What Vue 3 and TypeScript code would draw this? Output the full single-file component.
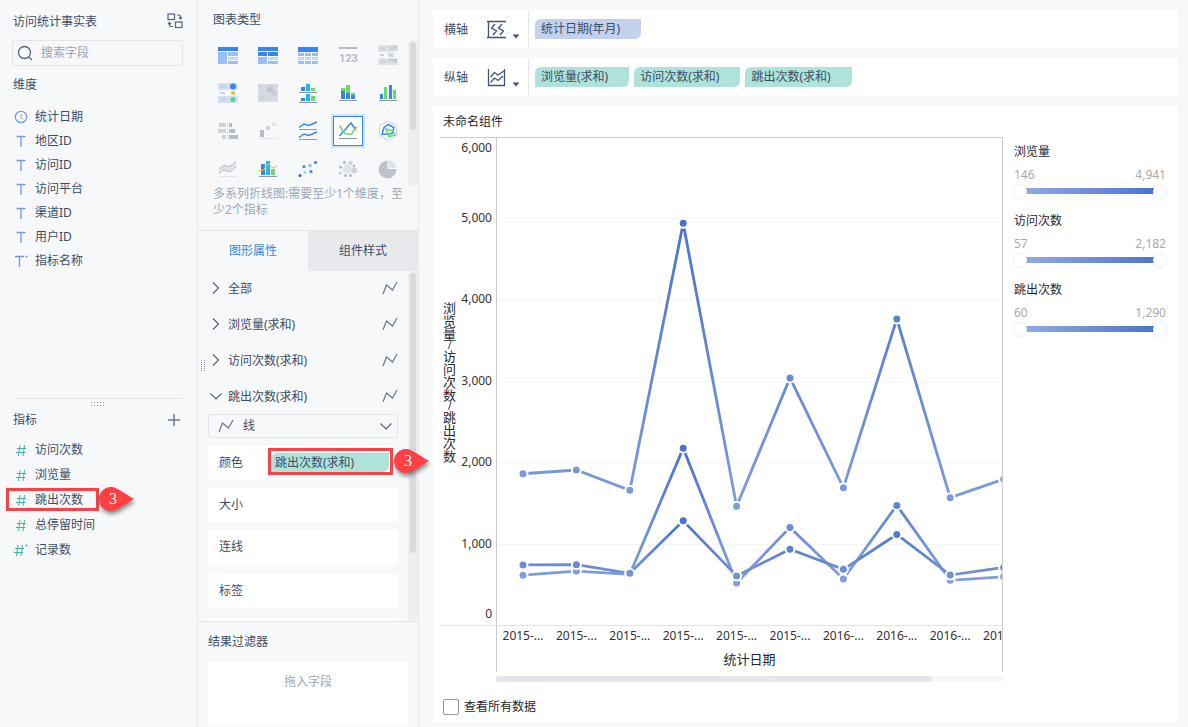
<script setup lang="ts">
import { ref } from 'vue'

type Shape = [string, Record<string, string | number>, string?]
interface ChartType { name: string; shapes: Shape[] }
interface Series { id: string; name: string; min: number; max: number; low: string; high: string; values: number[] }

const blue = '#3685f2'
const sky = '#96c0f7'
const pale = '#c0d9fa'
const cyan = '#22b5ee'
const green = '#6ad96f'
const base = '#8d98a8'
const g1 = '#b5bcc7'
const g2 = '#cdd2db'
const g3 = '#dfe3ea'

const r = (x: number, y: number, width: number, height: number, fill: string): Shape => ['rect', { x, y, width, height, fill }]
const c = (cx: number, cy: number, rad: number, fill: string): Shape => ['circle', { cx, cy, r: rad, fill }]
const l = (points: string, stroke: string, w = 1.5): Shape => ['polyline', { points, stroke, 'stroke-width': w, fill: 'none' }]
const p = (points: string, fill: string, stroke = 'none', w = 1): Shape => ['polygon', { points, fill, stroke, 'stroke-width': w }]
const t = (x: number, y: number, size: number, fill: string, text: string): Shape => ['text', { x, y, 'font-size': size, fill }, text]

const chartTypes: ChartType[] = [
  { name: '分组表', shapes: [r(0, 2, 20, 4, blue), r(0, 7, 9, 12, sky), r(10, 7, 10, 4, sky), r(10, 12, 10, 3, pale), r(10, 16, 10, 3, sky)] },
  { name: '交叉表', shapes: [r(0, 2, 20, 4, blue), r(0, 7, 9, 4, blue), r(10, 7, 10, 4, blue), r(0, 12, 9, 7, sky), r(10, 12, 10, 3, pale), r(10, 16, 10, 3, sky)] },
  { name: '明细表', shapes: [r(0, 2, 20, 5, blue), ...[8, 12, 16].flatMap((y) => [0, 7, 14].map((x) => r(x, y, 6, 3, y === 12 ? pale : sky)))] },
  { name: '指标卡', shapes: [r(1, 2, 18, 2, g1), t(1, 17, 11, g1, '123')] },
  { name: '颜色表格', shapes: [r(0, 0, 20, 7, g3), r(0, 13, 20, 7, g3), r(2, 2, 6, 3, g2), r(2, 9, 4, 2, g2), r(2, 15, 6, 3, g2), t(10, 5, 5, g1, '123'), t(10, 12, 5, g1, '90'), t(10, 18, 5, g1, '778')] },
  { name: '热力表格', shapes: [r(0, 0, 20, 7, '#d0e0fa'), r(0, 13, 20, 7, '#d0e0fa'), r(2, 2, 6, 3, g2), r(2, 9, 5, 2, g2), r(2, 15, 6, 3, g2), c(15, 3.5, 3, blue), c(15, 10, 2, '#f9b81f'), c(15, 16.5, 2.5, '#5fd37a')] },
  { name: '热力区域图', shapes: [r(0, 1, 20, 18, '#d8dce4'), c(12, 6, 4, '#c9ced8'), c(16, 10, 3, '#c9ced8'), c(4, 15, 3, '#ced3dc'), c(2, 4, 2, '#ced3dc'), c(12, 7, 2, '#bcc3cd'), c(16, 10, 1, '#bcc3cd'), c(12, 16, 2, '#ced3dc'), c(18, 3, 1, '#c9ced8')] },
  { name: '多系列柱形图', shapes: [r(3, 4, 4, 4, blue), r(8, 1, 4, 7, cyan), r(13, 5, 4, 3, green), r(1, 9, 18, 1, base), r(3, 15, 4, 3, blue), r(8, 11, 4, 7, cyan), r(13, 13, 4, 5, green), r(1, 19, 18, 1, base)] },
  { name: '堆积柱形图', shapes: [r(3, 5, 4, 3, green), r(3, 8, 4, 8, blue), r(8, 2, 4, 8, green), r(8, 10, 4, 6, blue), r(13, 10, 4, 2, green), r(13, 12, 4, 4, blue), r(1, 17, 18, 1, base)] },
  { name: '柱形图', shapes: [r(2, 11, 3, 5, blue), r(6, 4, 3, 12, green), r(11, 2, 3, 14, blue), r(15, 7, 3, 9, green), r(1, 17, 18, 1, base)] },
  { name: '对比柱状图', shapes: [r(1, 2, 7, 4, g2), r(11, 2, 3, 4, g1), r(0, 8, 8, 4, g2), r(11, 8, 6, 4, g1), r(4, 14, 4, 4, g2), r(11, 14, 9, 4, g1), r(9, 1, 1, 18, g3)] },
  { name: '瀑布图', shapes: [r(2, 9, 4, 7, g1), r(8, 5, 4, 4, g2), r(14, 2, 4, 3, g3), r(1, 17, 18, 1, g3)] },
  { name: '分区折线图', shapes: [l('1,6.5 6,3 11,4.5 19,1', blue), r(1, 8, 18, 1, base), l('1,16.5 6,13 11,14.5 19,11', blue), r(1, 18, 18, 1, base)] },
  { name: '多系列折线图', shapes: [l('1.5,15 13,2 18,9', blue), l('1.5,4.5 6.5,12.5 13.5,13.5 18.5,5.5', green), r(1, 17, 18, 1, base)] },
  { name: '雷达图', shapes: [p('10,0 18.5,4.5 18.5,14.5 10,19.5 1.5,14.5 1.5,4.5', 'none', g2), p('4,13.5 6,6.5 10.5,3.5 16,6.5 14,12.5', 'none', blue, 1.5), p('8,8 15,10 17,14 11,15.5', 'none', green, 1.5)] },
  { name: '范围面积图', shapes: [p('1,10 6,6.5 12,7.5 18,2 18,8 12,13 6,11 1,14.5', g3), l('1,10 6,6.5 12,7.5 18,2', g1, 1), l('1,14.5 6,11 12,13 18,8', g1, 1), r(1, 17, 18, 1, g3)] },
  { name: '组合图', shapes: [r(3, 5, 4, 11, blue), r(8, 2, 4, 14, cyan), r(13, 10, 4, 6, green), l('1,11.5 5,11.5 10,4.5 15,9 19,7', '#f5b921', 1), r(1, 17, 18, 1, base)] },
  { name: '散点图', shapes: [c(2, 16.5, 1.6, '#3b62c9'), c(6, 7.5, 1.6, blue), c(7, 13.5, 1.6, '#9be0d3'), c(12, 6.5, 1.6, '#5cc5d5'), c(13, 12.5, 1.6, blue), c(17.5, 3.5, 1.6, '#2f8fe8')] },
  { name: '聚合气泡图', shapes: [c(9, 10, 4.5, g3), c(6.5, 3.5, 1.7, g1), c(12.5, 4, 2.3, g2), c(16, 7, 1.4, g1), c(16, 11.5, 3, g2), c(12.5, 16.5, 1.6, g1), c(7.5, 16.5, 1.6, g1), c(2.5, 14, 1.8, g2), c(2.5, 8, 1.6, g1)] },
  { name: '饼图', shapes: [c(9.5, 10.5, 9, '#bcc3cd'), ['path', { d: 'M10 0.5A9 9 0 0 1 19 9.5H10Z', fill: g3, stroke: '#f7f8fa', 'stroke-width': 1 }]] },
]
const selectedType = ref(13)

const dimensions = [
  { name: '统计日期', icon: 'clock' },
  { name: '地区ID', icon: 'text' },
  { name: '访问ID', icon: 'text' },
  { name: '访问平台', icon: 'text' },
  { name: '渠道ID', icon: 'text' },
  { name: '用户ID', icon: 'text' },
  { name: '指标名称', icon: 'textStar' },
]
const measures = [
  { name: '访问次数', star: false },
  { name: '浏览量', star: false },
  { name: '跳出次数', star: false },
  { name: '总停留时间', star: false },
  { name: '记录数', star: true },
]
const groups = ['全部', '浏览量(求和)', '访问次数(求和)', '跳出次数(求和)']
const openGroup = ref('跳出次数(求和)')
const attributes = ['大小', '连线', '标签']
const verticalFields = ['浏览量(求和)', '访问次数(求和)', '跳出次数(求和)']
const axisTitle = ['浏览量', '/', '访问次数', '/', '跳出次数']

const step = 53.4
const plotHeight = 488
const yOf = (v: number) => plotHeight - (v / 6000) * 489
const xOf = (i: number) => 26 + i * step
const ticks = [
  { label: '6,000', y: 14 }, { label: '5,000', y: 84 }, { label: '4,000', y: 165 }, { label: '3,000', y: 247 },
  { label: '2,000', y: 328 }, { label: '1,000', y: 410 }, { label: '0', y: 480 },
]
const years = [2015, 2015, 2015, 2015, 2015, 2015, 2016, 2016, 2016, 2016]
const series: Series[] = [
  { id: 'views', name: '浏览量', min: 146, max: 4941, low: '146', high: '4,941', values: [1868, 1914, 1665, 4941, 1468, 3043, 1696, 3767, 1575, 1800] },
  { id: 'visits', name: '访问次数', min: 57, max: 2182, low: '57', high: '2,182', values: [624, 674, 633, 2182, 528, 1210, 577, 1480, 560, 605] },
  { id: 'bounces', name: '跳出次数', min: 60, max: 1290, low: '60', high: '1,290', values: [750, 752, 646, 1290, 615, 941, 695, 1123, 625, 718] },
]
const from = [147, 172, 226]
const to = [74, 114, 202]
const colorOf = (s: Series, v: number) => {
  const k = (v - s.min) / (s.max - s.min)
  return `rgb(${from.map((a, i) => Math.round(a + (to[i] - a) * k)).join(',')})`
}
const pointsOf = (s: Series) => s.values.map((v, i) => `${xOf(i)},${yOf(v)}`).join(' ')
</script>

<template>
  <div class="app">
    <aside class="fields">
      <section class="pane dims">
        <header class="pane-head">
          <h2>访问统计事实表</h2>
          <button class="plain" aria-label="切换数据表">
            <svg width="16" height="16" viewBox="0 0 16 16" fill="none" stroke="#56647c" stroke-width="1.200"><rect x="1" y="1" width="6.500" height="5.500" /><rect x="8.500" y="9" width="6.500" height="5.500" /><path d="M10 2h2q1.500 0 1.500 1.500v2M12 4.500l1.500 1.500L15 4.500M6 13.500H4q-1.500 0-1.500-1.500v-2M1 11l1.500-1.500L4 11" /></svg>
          </button>
        </header>
        <label class="search">
          <svg width="16" height="16" viewBox="0 0 16 16" fill="none" stroke="#56647c" stroke-width="1.300"><circle cx="7.500" cy="7.500" r="6" /><path d="M12 12l3 3" /></svg>
          <input type="search" placeholder="搜索字段" aria-label="搜索字段" />
        </label>
        <h3>维度</h3>
        <ul class="list">
          <li v-for="d in dimensions" :key="d.name">
            <svg width="14" height="14" viewBox="0 0 14 14" fill="none" stroke="#6f9ae6">
              <template v-if="d.icon === 'clock'"><circle cx="7" cy="7" r="5.700" stroke-width="1.200" /><path d="M7 4v3.500l2 2" /></template>
              <template v-else><path :d="d.icon === 'text' ? 'M2.500 2.500h9M7 2.500v10.500' : 'M1 2.500h9M5.500 2.500v10.500'" stroke-width="1.300" /><circle v-if="d.icon === 'textStar'" cx="12.500" cy="2.500" r="0.700" /></template>
            </svg>
            <span>{{ d.name }}</span>
          </li>
        </ul>
      </section>
      <section class="pane measures">
        <div class="grip"><i v-for="n in 10" :key="n"></i></div>
        <header class="pane-head">
          <h2>指标</h2>
          <button class="plain" aria-label="添加指标">
            <svg width="18" height="18" viewBox="0 0 18 18" stroke="#6b788d" stroke-width="1.500"><path d="M3 9h12M9 3v12" /></svg>
          </button>
        </header>
        <ul class="list tall">
          <li v-for="m in measures" :key="m.name">
            <svg width="14" height="14" viewBox="0 0 14 14" fill="none" stroke="#3db5a5">
              <path :d="m.star ? 'M1 5.500h9M0 9.500h9M4 2L2.500 13M8.500 2L7 13' : 'M3 5.500h9M2 9.500h9M6 2L4.500 13M10.500 2L9 13'" />
              <circle v-if="m.star" cx="12.500" cy="2.500" r="0.700" />
            </svg>
            <span>{{ m.name }}</span>
            <template v-if="m.name === '跳出次数'">
              <div class="mark field-mark"></div>
              <div class="pin field-pin">
                <svg width="36" height="24" viewBox="0 0 36 24"><path d="M12 0C17 0 20 3 35 12C20 21 17 24 12 24A12 12 0 0 1 12 0Z" fill="#fd4145" /></svg>
                <b>3</b>
              </div>
            </template>
          </li>
        </ul>
      </section>
    </aside>

    <aside class="config">
      <section class="types">
        <h2>图表类型</h2>
        <div class="types-scroll">
          <div class="type-grid">
            <button v-for="(ct, i) in chartTypes" :key="ct.name" class="type" :class="{ on: i === selectedType }" :aria-label="ct.name" @click="selectedType = i">
              <svg width="20" height="20" viewBox="0 0 20 20">
                <component :is="s[0]" v-for="(s, k) in ct.shapes" :key="k" v-bind="s[1]">{{ s[2] }}</component>
              </svg>
            </button>
          </div>
          <div class="bar"><i class="types-thumb"></i></div>
        </div>
        <p>多系列折线图:需要至少1个维度，至少2个指标</p>
      </section>
      <div class="tabs" role="tablist">
        <button role="tab" aria-selected="true" class="on">图形属性</button>
        <button role="tab" aria-selected="false">组件样式</button>
      </div>
      <section class="props">
        <div class="props-body">
          <button v-for="g in groups" :key="g" class="group" :aria-expanded="g === openGroup" @click="openGroup = g">
            <svg width="12" height="12" viewBox="0 0 12 12" fill="none" stroke="#56647c" stroke-width="1.200"><path :d="g === openGroup ? 'M0.500 3.500L6 9l5.500-5.500' : 'M3 0.500L8.500 6L3 11.500'" /></svg>
            <span>{{ g }}</span>
            <svg width="16" height="14" viewBox="0 0 16 14" fill="none" stroke="#6b788d" stroke-width="1.200"><path d="M1 13L4.500 4l6 5L15 1" /></svg>
          </button>
          <div class="shape">
            <svg width="16" height="14" viewBox="0 0 16 14" fill="none" stroke="#6b788d" stroke-width="1.200"><path d="M1 13L4.500 4l6 5L15 1" /></svg>
            <select aria-label="图形"><option>线</option></select>
            <svg class="chev" width="12" height="12" viewBox="0 0 12 12" fill="none" stroke="#56647c" stroke-width="1.200"><path d="M0.500 3.500L6 9l5.500-5.500" /></svg>
          </div>
          <div class="attr color">
            <span>颜色</span>
            <div class="drop"><span class="chip teal fill">跳出次数(求和)</span></div>
            <div class="pin color-pin">
              <svg width="36" height="24" viewBox="0 0 36 24"><path d="M12 0C17 0 20 3 35 12C20 21 17 24 12 24A12 12 0 0 1 12 0Z" fill="#fd4145" /></svg>
              <b>3</b>
            </div>
          </div>
          <div v-for="a in attributes" :key="a" class="attr" :class="{ far: a !== '大小' }">{{ a }}</div>
          <div class="attr"></div>
        </div>
        <div class="bar"><i class="props-thumb"></i></div>
      </section>
      <section class="filter">
        <h2>结果过滤器</h2>
        <div class="dropzone">拖入字段</div>
      </section>
      <div class="side-grip"><i v-for="n in 12" :key="n"></i></div>
    </aside>

    <main class="work">
      <section class="axis-row">
        <span class="axis-name">横轴</span>
        <button class="axis-btn" aria-label="横轴设置">
          <svg width="19" height="19" viewBox="0 0 19 19" fill="none" stroke="#44536c" stroke-width="1.300"><path d="M0 1.500h19M0 17.500h19M1.500 1v17M8 4L4.500 8l5 3L6 15M15 4l-3.500 4l5 3L13 15" /></svg>
          <svg class="caret" width="8" height="5" viewBox="0 0 8 5"><path d="M0.500 0.500h7L4 4.500z" fill="#44536c" /></svg>
        </button>
        <div class="chips"><span class="chip indigo">统计日期(年月)</span></div>
      </section>
      <section class="axis-row">
        <span class="axis-name">纵轴</span>
        <button class="axis-btn" aria-label="纵轴设置">
          <svg width="19" height="19" viewBox="0 0 19 19" fill="none" stroke="#44536c" stroke-width="1.300"><path d="M1.500 1v16.500H17.500V1M3.500 9l4-4.500l3.500 2.500L17 3M3.500 14.500L7.500 10l3.500 2.500L16 8" /></svg>
          <svg class="caret" width="8" height="5" viewBox="0 0 8 5"><path d="M0.500 0.500h7L4 4.500z" fill="#44536c" /></svg>
        </button>
        <div class="chips"><span v-for="f in verticalFields" :key="f" class="chip teal">{{ f }}</span></div>
      </section>
      <section class="board">
        <h1>未命名组件</h1>
        <div class="content">
          <div class="chart">
            <div class="frame">
              <div class="yaxis">
                <div class="ytitle"><span v-for="(a, i) in axisTitle" :key="i" :class="{ slash: a === '/' }">{{ a }}</span></div>
                <svg class="yticks" width="40" :height="plotHeight">
                  <text v-for="k in ticks" :key="k.label" x="36" :y="k.y" text-anchor="end">{{ k.label }}</text>
                </svg>
              </div>
              <div class="plot">
                <svg :width="step * 11" height="509">
                  <defs>
                    <linearGradient v-for="s in series" :id="s.id" :key="s.id" gradientUnits="userSpaceOnUse" x1="0" x2="0" :y1="yOf(s.min)" :y2="yOf(s.max)">
                      <stop offset="0" stop-color="#93ace2" /><stop offset="1" stop-color="#4a72ca" />
                    </linearGradient>
                  </defs>
                  <line v-for="n in 5" :key="n" x1="0" :x2="step * 11" :y1="yOf(n * 1000)" :y2="yOf(n * 1000)" stroke="#f5f5f5" />
                  <g v-for="s in series" :key="s.id">
                    <polyline :points="pointsOf(s)" fill="none" :stroke="`url(#${s.id})`" stroke-width="2.800" />
                    <circle v-for="(v, i) in s.values" :key="i" :cx="xOf(i)" :cy="yOf(v)" r="4.500" :fill="colorOf(s, v)" stroke="#fff" stroke-width="2" />
                  </g>
                  <text v-for="(y, i) in years" :key="i" :x="xOf(i)" y="502" text-anchor="middle">{{ y }}-...</text>
                </svg>
                <div class="xtitle">统计日期</div>
              </div>
            </div>
            <div class="hscroll"><i></i></div>
          </div>
          <div class="legend">
            <div v-for="s in series" :key="s.id" class="scale">
              <h4>{{ s.name }}</h4>
              <div class="ends"><span>{{ s.low }}</span><span>{{ s.high }}</span></div>
              <div class="slider">
                <input type="range" :min="s.min" :max="s.max" :value="s.min" :aria-label="s.name + '最小值'" />
                <input type="range" :min="s.min" :max="s.max" :value="s.max" :aria-label="s.name + '最大值'" />
              </div>
            </div>
          </div>
        </div>
        <label class="all"><input type="checkbox" /><span>查看所有数据</span></label>
      </section>
    </main>
  </div>
</template>

<style>
html, body { margin: 0; background: #f7f8fa; }
</style>

<style scoped>
* { box-sizing: border-box; }
.app { display: flex; min-height: 100vh; font: 12px/16px "Noto Sans", "Noto Sans CJK SC", sans-serif; color: #3d4d66; background: #f7f8fa; }
h1, h2, h3, h4, p, ul { margin: 0; padding: 0; font-size: 12px; font-weight: 400; list-style: none; }
button, input, select { font: inherit; color: inherit; margin: 0; padding: 0; border: 0; background: none; border-radius: 0; }
button { cursor: pointer; }
svg { display: block; flex: none; }

.fields { flex: none; width: 198px; border-right: 1px solid #e6e8ee; display: flex; flex-direction: column; }
.pane { padding: 0 14px 0 13px; }
.dims { flex: 398 1 0; }
.measures { flex: 329 1 0; position: relative; }
.measures::before { content: ""; display: block; border-top: 1px solid #e4e6ea; }
.pane-head { display: flex; align-items: center; justify-content: space-between; height: 18px; margin-top: 12px; }
.dims .pane-head h2 { padding-top: 2px; }
.plain { display: flex; }
.grip { position: absolute; top: 4px; left: 91px; display: grid; grid-template-columns: repeat(5, 1px); gap: 2px; }
.grip i, .side-grip i { width: 1px; height: 1px; background: #8b96a8; }
.search { display: flex; align-items: center; gap: 8px; height: 26px; margin: 10px 0 11px -1px; padding: 0 4px; border: 1px solid #e4e6ea; border-radius: 2px; }
.search input { flex: 1; min-width: 0; outline: 0; appearance: none; }
.search input::placeholder { color: #9aa3b3; opacity: 1; }
.dims .list { margin-top: 12px; }
.measures .list { margin-top: 8px; }
.list li { position: relative; display: flex; align-items: center; gap: 7px; height: 24px; padding-left: 1px; }
.list.tall li { height: 25px; }

.mark { position: absolute; border: 3px solid #f94248; }
.field-mark { left: -7px; top: 1px; width: 93px; height: 23px; }
.pin { position: absolute; z-index: 3; filter: drop-shadow(1px 3px 2px rgba(60, 60, 60, .6)); }
.pin b { position: absolute; left: 0; top: 0; width: 28px; text-align: center; font: 400 16px/24px "Liberation Serif", serif; color: #fff; }
.field-pin { left: 86px; top: 0; }
.color-pin { left: 186px; top: 3px; }

.config { position: relative; flex: none; width: 221px; border-right: 1px solid #e6e8ee; display: flex; flex-direction: column; }
.types { padding-top: 12px; height: 231px; border-bottom: 1px solid #e4e6ea; }
.types h2 { padding-left: 15px; }
.types-scroll { display: flex; justify-content: space-between; height: 146px; margin-top: 12px; }
.type-grid { display: grid; grid-template-columns: repeat(5, 40px); grid-auto-rows: 38px; margin: -4px 0 0 10px; height: 152px; }
.type { display: flex; align-items: center; justify-content: center; width: 30px; height: 30px; margin: 4px 5px; }
.type.on { border: 1px solid #3685f2; background: #fff; box-shadow: 0 0 0 2px #cfe1fb; }
.type { font-family: Roboto, sans-serif; font-weight: 700; }
.types p { padding: 0 13px 0 15px; color: #9ea6b5; }
.bar { flex: none; width: 10px; padding: 2px; background: #edeef2; border-radius: 5px; }
.bar i { display: block; width: 6px; background: #d8dade; border-radius: 3px; }
.types-thumb { height: 88px; }
.props-thumb { height: 81%; }
.tabs { display: flex; }
.tabs button { flex: 1; height: 40px; background: #e8e9ed; }
.tabs .on { background: none; color: #3685f2; }
.props { display: flex; height: 350px; }
.props-body { flex: 1; min-width: 0; padding: 0 10px; clip-path: inset(0 -40px 0 0); }
.group { display: flex; align-items: center; width: 100%; height: 36px; padding: 0 0 2px 2px; text-align: left; }
.group span { flex: 1; margin-left: 6px; padding-top: 2px; }
.shape { position: relative; display: flex; align-items: center; height: 24px; margin: -1px 0 8px; padding-left: 9px; border: 1px solid #e4e6ea; border-radius: 2px; }
.shape select { position: relative; flex: 1; height: 22px; padding-left: 9px; appearance: none; outline: 0; }
.chev { position: absolute; right: 5px; pointer-events: none; }
.attr { position: relative; display: flex; align-items: center; height: 34px; margin-bottom: 8px; padding-left: 11px; background: #fff; }
.attr.far { margin-bottom: 10px; }
.drop { flex: 1; align-self: flex-start; margin: 2px 5px 0 25px; padding: 2px 1px 0 0; height: 27px; border: 3px solid #f94248; }
.chip { display: block; height: 20px; line-height: 20px; padding: 0 21px 0 6px; border-radius: 6px 0 6px 0; white-space: nowrap; }
.drop .chip { height: 19px; padding-left: 4px; }
.teal { background: #aee2db; }
.indigo { background: #c3d0ee; }
.filter { flex: 1; display: flex; flex-direction: column; gap: 12px; padding: 12px 10px 3px; border-top: 1px solid #e4e6ea; }
.dropzone { flex: 1; padding-top: 12px; text-align: center; color: #9ea6b5; background: #fff; }
.side-grip { position: absolute; left: 3px; top: 360px; display: grid; grid-template-columns: repeat(2, 1px); gap: 1px 2px; }

.work { flex: 1; min-width: 0; display: flex; flex-direction: column; gap: 10px; padding: 10px 10px 5px 14px; }
.axis-row { display: flex; align-items: center; height: 38px; background: #fff; }
.axis-name { margin-left: 11px; padding-top: 2px; }
.axis-btn { position: relative; display: flex; align-items: center; gap: 6px; height: 36px; margin-left: 19px; padding-right: 8px; border-right: 1px solid #e4e6ea; }
.caret { margin-top: 15px; }
.chips { display: flex; gap: 5px; margin-left: 6px; }
.board { flex: 1; display: flex; flex-direction: column; background: #fff; color: #1f2633; }
h1 { padding-left: 10px; line-height: 31px; }
.content { display: flex; padding-left: 7px; }
.chart { flex: 1; min-width: 0; }
.chart text { font-size: 12px; fill: #333; }
.frame { display: flex; border-top: 1px solid #ccc; border-right: 1px solid #ccc; background: linear-gradient(#e3e3e3, #e3e3e3) 0 487px / 100% 1px no-repeat; }
.yaxis { display: flex; width: 56px; }
.yticks { overflow: visible; }
.ytitle { display: flex; flex-direction: column; justify-content: center; width: 16px; height: 488px; padding-left: 3px; font-size: 13px; line-height: 13px; }
.ytitle span { width: 13px; word-break: break-all; }
.ytitle .slash { font-size: 10px; line-height: 9px; text-align: center; }
.plot { flex: 1; min-width: 0; overflow: hidden; border-left: 1px solid #ccc; }
.xtitle { height: 25px; line-height: 24px; font-size: 13px; text-align: center; }
.hscroll { height: 6px; margin: 4px 0 0 56px; border-radius: 3px; background: #f7f7f8; }
.hscroll i { display: block; width: 86%; height: 6px; border-radius: 3px; background: #e5e6ea; }
.legend { flex: none; width: 175px; padding: 6px 12px 0 11px; }
.scale { height: 69px; }
.scale h4 { line-height: 18px; }
.ends { display: flex; justify-content: space-between; margin-top: 6px; color: #aaa; }
.slider { position: relative; height: 6px; margin-top: 5px; background: linear-gradient(90deg, #93ace2, #4a72ca) 50% / calc(100% - 14px) 100% no-repeat; }
.slider input { position: absolute; left: 0; top: -4px; width: 100%; height: 14px; appearance: none; pointer-events: none; }
.slider input::-webkit-slider-thumb { appearance: none; width: 13px; height: 13px; border-radius: 50%; background: #fff; box-shadow: 0 0 3px rgba(74, 114, 202, .25); pointer-events: auto; }
.all { display: flex; align-items: center; gap: 5px; margin: 17px 0 7px 10px; }
.all input { appearance: none; width: 16px; height: 16px; border: 1px solid #8f9aab; border-radius: 2px; background: #fff; }
.all input:checked { background: #3685f2; }
</style>
